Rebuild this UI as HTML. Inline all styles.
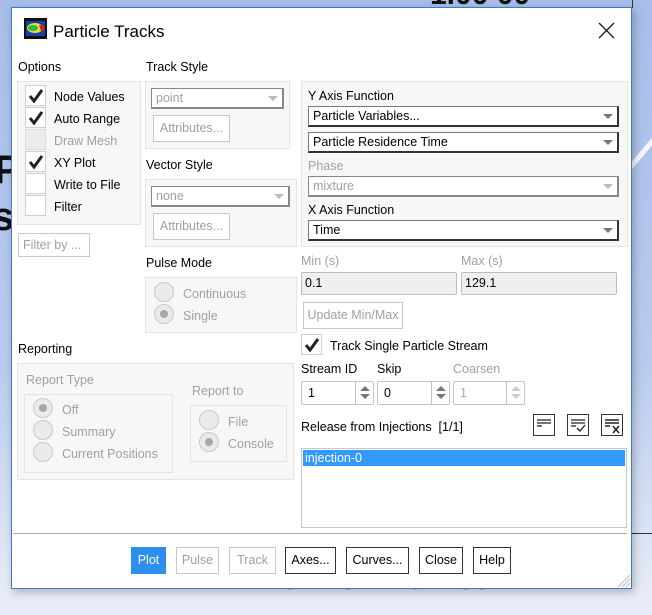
<!DOCTYPE html>
<html><head><meta charset="utf-8"><style>
*{box-sizing:border-box;margin:0;padding:0}
body{width:652px;height:615px;overflow:hidden;position:relative;background:linear-gradient(180deg,#a7bde8 0%,#b9cbee 60%,#e6ebf5 96%);font-family:"Liberation Sans",sans-serif;font-size:12.5px;color:#000}
.a{position:absolute}
.dlg{left:11px;top:7px;width:621px;height:582px;background:#fff;border:1px solid #3d7cc4;box-shadow:2px 3px 8px rgba(0,0,0,.25)}
.lbl{position:absolute;white-space:nowrap;line-height:14px}
.g{color:#a0a0a0}
.box{position:absolute;background:#f7f7f7;border:1px solid #e4e4e4}
.cb{position:absolute;width:21px;height:21px;border:1px solid #cfcfcf;background:#fff}
.cb.dis{background:#ececec;border-color:#dcdcdc}
.cb svg{position:absolute;left:2px;top:2px}
.dd{position:absolute;height:21px;border:1px solid #7a7a7a;border-right:2px solid #333;border-bottom:2px solid #333;background:#fff;padding:3px 4px;line-height:13px;white-space:nowrap}
.dd.dis{border-color:#888;color:#a0a0a0}
.dd:after{content:"";position:absolute;right:4px;top:7px;border-left:5px solid transparent;border-right:5px solid transparent;border-top:5px solid #777}
.dd.dis:after{border-top-color:#bbb}
.btn{position:absolute;height:27px;border:1px solid #333;background:#fff;text-align:center;line-height:25px;white-space:nowrap}
.btn.dis{border-color:#c8c8c8;color:#a0a0a0}
.rd{position:absolute;width:20px;height:20px;border-radius:50%;border:1px solid #c9c9c9;background:#eaeaea}
.rd.on:after{content:"";position:absolute;left:5px;top:5px;width:8px;height:8px;border-radius:50%;background:#a8a8a8}
.inp{position:absolute;height:23px;border:1px solid #bdbdbd;border-radius:2px;background:#efefef;padding:4px 3px;line-height:13px}
.sp{position:absolute;height:24px;border:1px solid #c4c4c4;border-radius:2px;background:#fff;padding:5px 6px;line-height:13px}
.sp i{position:absolute;right:0;top:0;width:18px;height:22px;border-left:1px solid #c4c4c4}
.sp i:before{content:"";position:absolute;left:4px;top:4px;border-left:5px solid transparent;border-right:5px solid transparent;border-bottom:5px solid #777}
.sp i:after{content:"";position:absolute;left:4px;top:12px;border-left:5px solid transparent;border-right:5px solid transparent;border-top:5px solid #777}
.sp.dis{color:#aaa}.sp.dis i:before{border-bottom-color:#ccc}.sp.dis i:after{border-top-color:#ccc}
.ic{position:absolute;width:22px;height:22px;border:1px solid #333;background:#fff}
.big{position:absolute;font-weight:bold;font-size:40px;color:#111;font-family:"Liberation Sans",sans-serif}
</style></head><body>
<div class="big" style="left:-6px;top:148px">P</div>
<div class="big" style="left:-8px;top:195px">s</div>
<div class="big" style="left:430px;top:-22px;font-size:30px">1.00 00</div>
<div class="big" style="left:282px;top:563px;font-size:30px">0 &nbsp; 20 &nbsp;&nbsp; 40 &nbsp;&nbsp; 60</div>
<div class="a" style="left:632px;top:0;width:1px;height:8px;background:#333"></div>
<div class="a" style="left:632px;top:533px;width:20px;height:1px;background:#333"></div>
<div class="a" style="left:634px;top:120px;width:5px;height:80px;background:#f4f6fb;transform:rotate(40deg)"></div>

<div class="a dlg">
<svg class="a" style="left:12px;top:10px" width="23" height="21"><rect x="0" y="0" width="23" height="21" fill="#111"/><rect x="2" y="3" width="19" height="15" fill="#1a3fb0"/><ellipse cx="11" cy="10" rx="8" ry="5" fill="#e8e020"/><ellipse cx="9" cy="10" rx="5" ry="3" fill="#2db84a"/><path d="M15 7 h5 v6 h-3z" fill="#d22"/></svg>
<div class="lbl" style="left:41px;top:14px;font-size:17px;line-height:20px">Particle Tracks</div>
<svg class="a" style="left:586px;top:14px" width="17" height="17"><path d="M1 1L16 16M16 1L1 16" stroke="#222" stroke-width="1.4"/></svg>

<div class="lbl" style="left:6px;top:52px">Options</div>
<div class="box" style="left:5px;top:73px;width:124px;height:144px"></div>
<div class="cb" style="left:13px;top:77px"><svg width="16" height="16"><path d="M2 8l4 5 8-11" stroke="#222" stroke-width="3" fill="none"/></svg></div>
<div class="lbl" style="left:42px;top:82px">Node Values</div>
<div class="cb" style="left:13px;top:99px"><svg width="16" height="16"><path d="M2 8l4 5 8-11" stroke="#222" stroke-width="3" fill="none"/></svg></div>
<div class="lbl" style="left:42px;top:104px">Auto Range</div>
<div class="cb dis" style="left:13px;top:121px"></div>
<div class="lbl g" style="left:42px;top:126px">Draw Mesh</div>
<div class="cb" style="left:13px;top:143px"><svg width="16" height="16"><path d="M2 8l4 5 8-11" stroke="#222" stroke-width="3" fill="none"/></svg></div>
<div class="lbl" style="left:42px;top:148px">XY Plot</div>
<div class="cb" style="left:13px;top:165px"></div>
<div class="lbl" style="left:42px;top:170px">Write to File</div>
<div class="cb" style="left:13px;top:187px"></div>
<div class="lbl" style="left:42px;top:192px">Filter</div>
<div class="btn dis" style="left:6px;top:225px;width:72px;height:24px;line-height:22px;text-align:left;padding-left:4px">Filter by ...</div>

<div class="lbl" style="left:134px;top:52px">Track Style</div>
<div class="box" style="left:133px;top:73px;width:145px;height:68px"></div>
<div class="dd dis" style="left:139px;top:80px;width:133px">point</div>
<div class="btn dis" style="left:141px;top:107px;width:77px">Attributes...</div>
<div class="lbl" style="left:134px;top:150px">Vector Style</div>
<div class="box" style="left:133px;top:171px;width:152px;height:68px"></div>
<div class="dd dis" style="left:139px;top:178px;width:139px">none</div>
<div class="btn dis" style="left:141px;top:205px;width:77px">Attributes...</div>
<div class="lbl" style="left:134px;top:248px">Pulse Mode</div>
<div class="box" style="left:133px;top:269px;width:152px;height:56px"></div>
<div class="rd" style="left:142px;top:274px"></div>
<div class="lbl g" style="left:171px;top:279px">Continuous</div>
<div class="rd on" style="left:142px;top:296px"></div>
<div class="lbl g" style="left:171px;top:301px">Single</div>

<div class="lbl" style="left:6px;top:334px">Reporting</div>
<div class="box" style="left:5px;top:355px;width:277px;height:117px"></div>
<div class="lbl g" style="left:14px;top:365px">Report Type</div>
<div class="box" style="left:12px;top:386px;width:149px;height:79px"></div>
<div class="rd on" style="left:21px;top:390px"></div><div class="lbl g" style="left:50px;top:395px">Off</div>
<div class="rd" style="left:21px;top:412px"></div><div class="lbl g" style="left:50px;top:417px">Summary</div>
<div class="rd" style="left:21px;top:434px"></div><div class="lbl g" style="left:50px;top:439px">Current Positions</div>
<div class="lbl g" style="left:180px;top:376px">Report to</div>
<div class="box" style="left:178px;top:397px;width:97px;height:57px"></div>
<div class="rd" style="left:187px;top:402px"></div><div class="lbl g" style="left:216px;top:407px">File</div>
<div class="rd on" style="left:187px;top:424px"></div><div class="lbl g" style="left:216px;top:429px">Console</div>

<div class="box" style="left:289px;top:73px;width:327px;height:166px"></div>
<div class="lbl" style="left:296px;top:81px">Y Axis Function</div>
<div class="dd" style="left:296px;top:98px;width:311px">Particle Variables...</div>
<div class="dd" style="left:296px;top:124px;width:311px">Particle Residence Time</div>
<div class="lbl g" style="left:296px;top:151px">Phase</div>
<div class="dd dis" style="left:296px;top:168px;width:311px">mixture</div>
<div class="lbl" style="left:296px;top:195px">X Axis Function</div>
<div class="dd" style="left:296px;top:212px;width:311px">Time</div>

<div class="lbl g" style="left:289px;top:246px">Min (s)</div>
<div class="lbl g" style="left:449px;top:246px">Max (s)</div>
<div class="inp" style="left:289px;top:264px;width:156px">0.1</div>
<div class="inp" style="left:449px;top:264px;width:156px">129.1</div>
<div class="btn dis" style="left:291px;top:294px;width:100px">Update Min/Max</div>
<div class="cb" style="left:289px;top:326px"><svg width="16" height="16"><path d="M2 8l4 5 8-11" stroke="#222" stroke-width="3" fill="none"/></svg></div>
<div class="lbl" style="left:318px;top:331px">Track Single Particle Stream</div>
<div class="lbl" style="left:289px;top:354px">Stream ID</div>
<div class="lbl" style="left:365px;top:354px">Skip</div>
<div class="lbl g" style="left:441px;top:354px">Coarsen</div>
<div class="sp" style="left:289px;top:373px;width:73px">1<i></i></div>
<div class="sp" style="left:365px;top:373px;width:73px">0<i></i></div>
<div class="sp dis" style="left:441px;top:373px;width:72px">1<i></i></div>
<div class="lbl" style="left:289px;top:412px">Release from Injections &nbsp;[1/1]</div>
<div class="ic" style="left:521px;top:406px"><svg width="20" height="20"><path d="M3 5h14M3 8h14M3 11h5" stroke="#222" stroke-width="1.2"/></svg></div>
<div class="ic" style="left:555px;top:406px"><svg width="20" height="20"><path d="M3 5h14M3 8h14M3 11h5M9 13l3 3 5-6" stroke="#222" stroke-width="1.3" fill="none"/></svg></div>
<div class="ic" style="left:589px;top:406px"><svg width="20" height="20"><path d="M3 5h14M3 8h14M3 11h5M11 11l6 7M17 11l-6 7" stroke="#222" stroke-width="1.5" fill="none"/></svg></div>
<div class="a" style="left:289px;top:440px;width:326px;height:80px;border:1px solid #c8c8c8;background:#fff"><div style="margin:1px 0 0 1px;width:322px;height:16px;background:#3399ff;color:#fff;line-height:16px;padding-left:2px">injection-0</div></div>
<div class="a" style="left:1px;top:525px;width:614px;height:1px;background:#aaa"></div>

<div class="btn" style="left:119px;top:539px;width:35px;background:#2b8ff0;border-color:#2b8ff0;color:#fff">Plot</div>
<div class="btn dis" style="left:164px;top:539px;width:43px">Pulse</div>
<div class="btn dis" style="left:217px;top:539px;width:47px">Track</div>
<div class="btn" style="left:273px;top:539px;width:51px">Axes...</div>
<div class="btn" style="left:334px;top:539px;width:63px">Curves...</div>
<div class="btn" style="left:407px;top:539px;width:44px">Close</div>
<div class="btn" style="left:461px;top:539px;width:38px">Help</div>
<svg class="a" style="left:605px;top:566px" width="14" height="14"><path d="M13 1L1 13M13 5L5 13M13 9L9 13" stroke="#bbb"/></svg>
</div>
</body></html>
